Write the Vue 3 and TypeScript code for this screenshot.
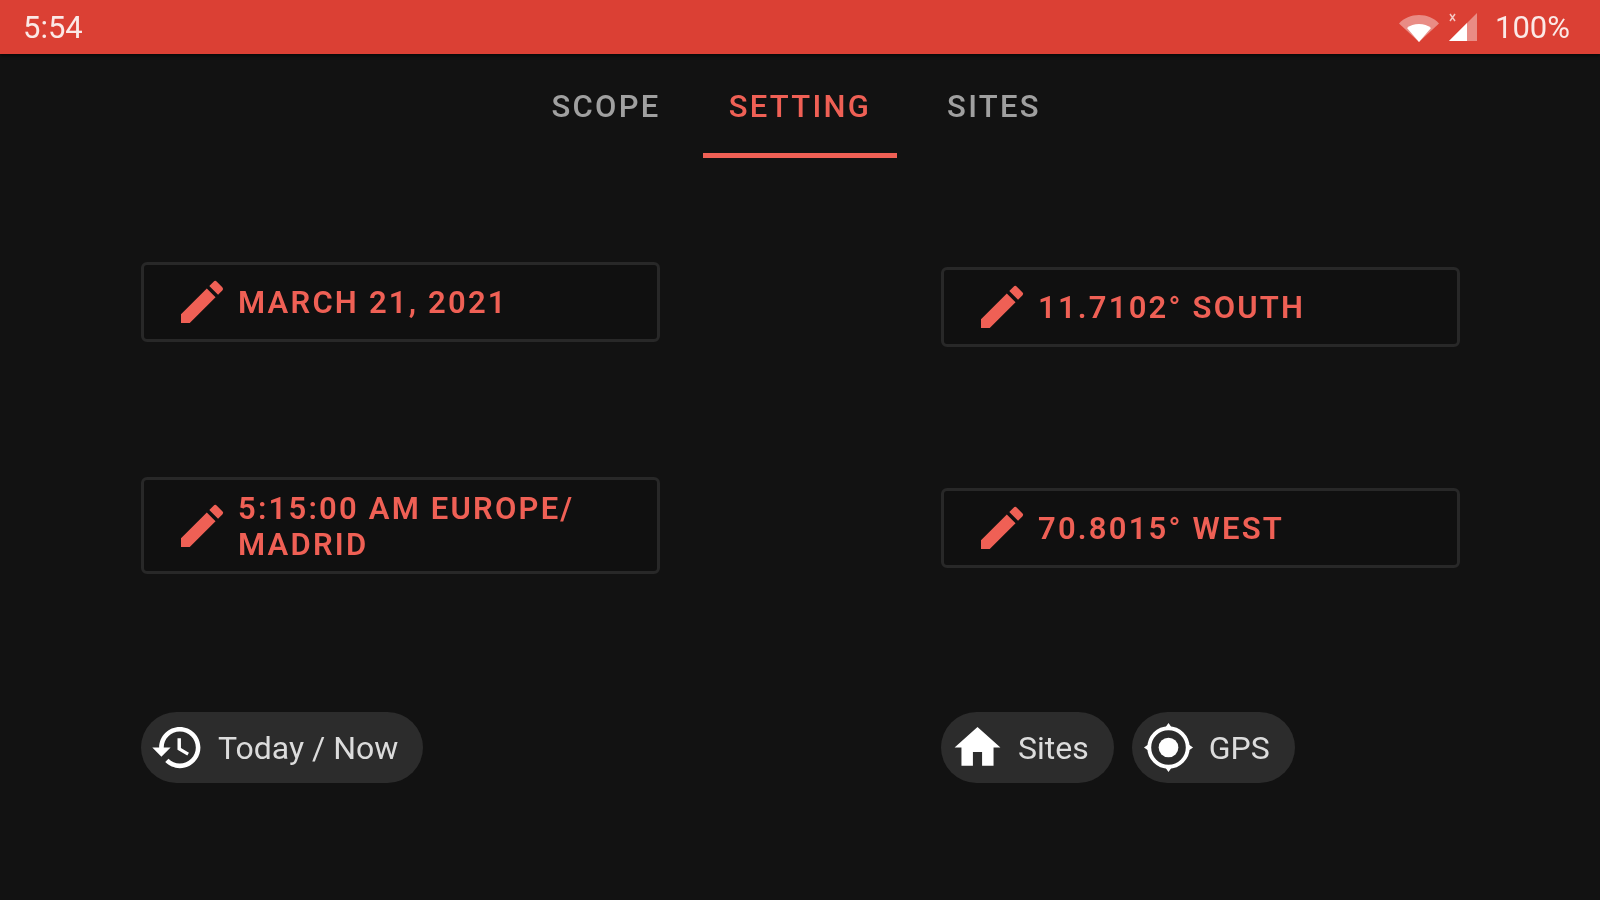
<script setup lang="ts">
import { ref } from 'vue';

const tabs = ['SCOPE', 'SETTING', 'SITES'];
const activeTab = ref('SETTING');

const pencil = 'M3 17.25V21h3.75L17.81 9.94l-3.75-3.75L3 17.25zM20.71 7.04a1 1 0 0 0 0-1.41l-2.34-2.34a1 1 0 0 0-1.41 0l-1.83 1.83 3.75 3.75 1.83-1.83z';
const historyIcon = 'M13 3c-4.97 0-9 4.03-9 9H1l3.89 3.89.07.14L9 12H6c0-3.87 3.13-7 7-7s7 3.13 7 7-3.13 7-7 7c-1.93 0-3.68-.79-4.94-2.06l-1.42 1.42C8.27 19.99 10.51 21 13 21c4.97 0 9-4.03 9-9s-4.03-9-9-9zm-1 5v5l4.28 2.54.72-1.21-3.5-2.08V8H12z';
const homeIcon = 'M10 20v-6h4v6h5v-8h3L12 3 2 12h3v8z';
</script>

<template>
  <div class="screen">
    <header class="status-bar">
      <span class="status-bar__time">5:54</span>
      <div class="status-bar__right">
        <svg class="status-bar__wifi" viewBox="0 0 40 28">
          <path d="M0 9.500C5 4 12 1 20 1s15 3 20 8.500L20 28z" fill="#fff" opacity="0.4" />
          <path d="M8 14c3-2.500 7.500-4 12-4s9 1.500 12 4L20 28z" fill="#fff" />
        </svg>
        <svg class="status-bar__signal" viewBox="0 0 30 29">
          <path d="M29 1v28H1z" fill="#fff" opacity="0.4" />
          <path d="M19 11v18H1z" fill="#fff" />
          <path d="M2 2l5 7M7 2L2 9" stroke="#fff" stroke-width="1.500" fill="none" opacity="0.7" />
        </svg>
        <span class="status-bar__battery">100%</span>
      </div>
    </header>

    <nav class="tabs">
      <button
        v-for="tab in tabs"
        :key="tab"
        type="button"
        class="tabs__item"
        :class="{ 'tabs__item--active': tab === activeTab }"
        @click="activeTab = tab"
      >
        {{ tab }}
      </button>
    </nav>

    <main class="settings">
      <section class="column column--left">
        <div class="field">
          <svg class="field__icon" viewBox="0 0 24 24"><path :d="pencil" /></svg>
          <span class="field__text">MARCH 21, 2021</span>
        </div>
        <div class="field field--tall">
          <svg class="field__icon" viewBox="0 0 24 24"><path :d="pencil" /></svg>
          <span class="field__text">5:15:00 AM EUROPE/ MADRID</span>
        </div>
        <div class="chips">
          <button type="button" class="chip chip--today">
            <svg class="chip__icon" viewBox="0 0 24 24"><path :d="historyIcon" /></svg>
            Today / Now
          </button>
        </div>
      </section>

      <section class="column column--right">
        <div class="field">
          <svg class="field__icon" viewBox="0 0 24 24"><path :d="pencil" /></svg>
          <span class="field__text">11.7102° SOUTH</span>
        </div>
        <div class="field">
          <svg class="field__icon" viewBox="0 0 24 24"><path :d="pencil" /></svg>
          <span class="field__text">70.8015° WEST</span>
        </div>
        <div class="chips">
          <button type="button" class="chip chip--sites">
            <svg class="chip__icon" viewBox="0 0 24 24"><path :d="homeIcon" /></svg>
            Sites
          </button>
          <button type="button" class="chip chip--gps">
            <svg class="chip__icon" viewBox="0 0 24 24">
              <circle cx="12" cy="12" r="4.300" />
              <circle class="chip__ring" cx="12" cy="12" r="8.400" />
              <path d="M12 1.300l1.400 2h-2.800zM12 22.700l1.400-2h-2.800zM1.300 12l2-1.400v2.800zM22.700 12l-2-1.400v2.800z" />
            </svg>
            GPS
          </button>
        </div>
      </section>
    </main>
  </div>
</template>

<style>
body {
  background: #121212;
}
</style>

<style scoped>
.screen {
  display: flex;
  flex-direction: column;
  height: 900px;
  overflow: hidden;
  background: #121212;
  font-family: Roboto, "Liberation Sans", sans-serif;
  filter: blur(0.7px);
}

.status-bar {
  display: flex;
  flex-shrink: 0;
  align-items: center;
  justify-content: space-between;
  height: 54px;
  padding: 0 30px 0 23px;
  background: #db4034;
  color: #fbe9e7;
  font-size: 31px;
  box-shadow: 0 2px 3px rgba(0, 0, 0, 0.5);
}

.status-bar__right {
  display: flex;
  align-items: center;
}

.status-bar__wifi {
  width: 40px;
  height: 28px;
  margin-top: 1px;
}

.status-bar__signal {
  width: 30px;
  height: 29px;
  margin-left: 9px;
  margin-bottom: 1px;
}

.status-bar__battery {
  margin-left: 17px;
}

.tabs {
  display: flex;
  flex-shrink: 0;
  justify-content: center;
  height: 104px;
}

.tabs__item {
  width: 194px;
  height: 104px;
  padding: 5px 0 0;
  border: none;
  border-bottom: 5px solid transparent;
  background: none;
  color: #a0a0a0;
  font-family: inherit;
  font-size: 31px;
  font-weight: 500;
  letter-spacing: 2.300px;
  cursor: pointer;
}

.tabs__item--active {
  border-bottom-color: #ef6055;
  color: #ef6055;
}

.settings {
  display: grid;
  grid-template-columns: 800px 800px;
}

.column {
  display: flex;
  flex-direction: column;
  width: 519px;
  margin-left: 141px;
}

.column--left {
  padding-top: 104px;
  gap: 135px;
}

.column--right {
  padding-top: 109px;
  gap: 141px;
}

.field {
  display: flex;
  box-sizing: border-box;
  align-items: center;
  gap: 8px;
  height: 80px;
  padding: 0 30px;
  border: 3px solid #282828;
  border-radius: 6px;
  background: #101010;
  color: #ef6055;
}

.field--tall {
  height: 97px;
}

.field__icon {
  flex-shrink: 0;
  width: 56px;
  height: 56px;
  fill: #ef6055;
}

.field__text {
  padding-top: 2px;
  font-size: 31px;
  font-weight: 600;
  line-height: 36px;
  letter-spacing: 2.200px;
}

.chips {
  display: flex;
  gap: 18px;
  margin-top: 3px;
}

.chip {
  display: flex;
  align-items: center;
  gap: 13px;
  height: 71px;
  padding: 0 25px 0 9px;
  border: none;
  border-radius: 36px;
  background: #2c2c2c;
  color: #dcdcdc;
  font-family: inherit;
  font-size: 32px;
  cursor: pointer;
}

.chip__icon {
  flex-shrink: 0;
  width: 55px;
  height: 55px;
  fill: #fff;
}

.chip__ring {
  fill: none;
  stroke: #fff;
  stroke-width: 1.700;
}
</style>
